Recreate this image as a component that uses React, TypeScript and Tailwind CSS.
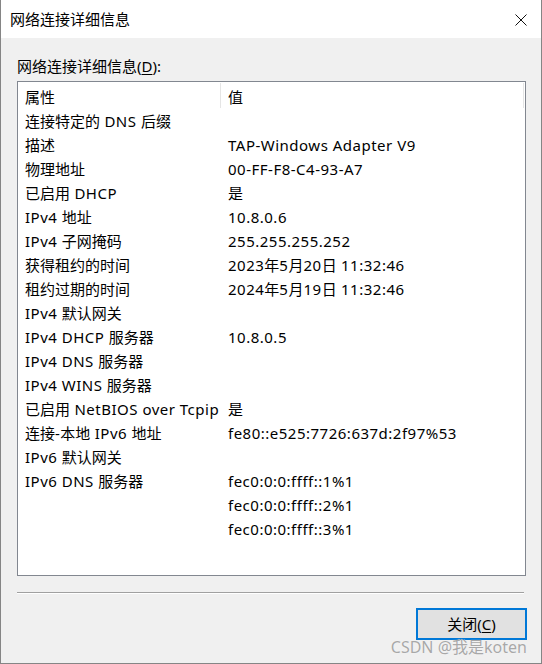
import React from 'react';

const rows: [string, string][] = [
  ['连接特定的 DNS 后缀', ''],
  ['描述', 'TAP-Windows Adapter V9'],
  ['物理地址', '00-FF-F8-C4-93-A7'],
  ['已启用 DHCP', '是'],
  ['IPv4 地址', '10.8.0.6'],
  ['IPv4 子网掩码', '255.255.255.252'],
  ['获得租约的时间', '2023年5月20日 11:32:46'],
  ['租约过期的时间', '2024年5月19日 11:32:46'],
  ['IPv4 默认网关', ''],
  ['IPv4 DHCP 服务器', '10.8.0.5'],
  ['IPv4 DNS 服务器', ''],
  ['IPv4 WINS 服务器', ''],
  ['已启用 NetBIOS over Tcpip', '是'],
  ['连接-本地 IPv6 地址', 'fe80::e525:7726:637d:2f97%53'],
  ['IPv6 默认网关', ''],
  ['IPv6 DNS 服务器', 'fec0:0:0:ffff::1%1'],
  ['', 'fec0:0:0:ffff::2%1'],
  ['', 'fec0:0:0:ffff::3%1'],
];

const font = { fontFamily: '"Segoe UI", "Noto Sans", "Noto Sans CJK SC", sans-serif' };

// latin runs get a little tracking so they come out as wide as Segoe UI
const Txt = ({ s }: { s: string }) => (
  <>
    {s.split(/([\u4e00-\u9fff]+)/).map((part, i) =>
      i % 2 === 1 ? (
        <span key={i}>{part}</span>
      ) : (
        <span key={i} className="tracking-[0.5px]">{part}</span>
      )
    )}
  </>
);

export default function App() {
  return (
    <div
      className="relative w-[542px] h-[664px] flex flex-col border-x border-b border-[#858585] text-[15px] text-black overflow-hidden"
      style={font}
    >
      <div className="h-[38px] bg-white flex items-center justify-between pl-[9px] pr-[14px] shrink-0">
        <span className="leading-5">网络连接详细信息</span>
        <svg width="12" height="12" viewBox="0 0 12 12" className="mt-[1px]">
          <path d="M0.5 0.5 L11.5 11.5 M11.5 0.5 L0.5 11.5" stroke="#111" strokeWidth="1" fill="none" />
        </svg>
      </div>
      <div className="flex-1 bg-[#f0f0f0] flex flex-col pl-[16px] pr-[15px]">
        <div className="mt-[18px] leading-5">
          网络连接详细信息(<span className="underline underline-offset-2">D</span>):
        </div>
        <div className="mt-[5px] h-[495px] bg-white border border-[#828790] flex flex-col">
          <div className="h-[27px] flex items-stretch shrink-0 pr-[1px]">
            <div className="w-[203px] pl-[7px] pt-[4px] leading-5 border-r border-[#e5e5e5] mt-[1px] mb-[1px]">属性</div>
            <div className="flex-1 pl-[7px] pt-[4px] leading-5 border-r border-[#e5e5e5] mt-[1px] mb-[1px]">值</div>
          </div>
          {rows.map(([k, v], i) => (
            <div key={i} className="h-[24px] flex items-center shrink-0">
              <div className="w-[203px] pl-[7px] leading-5 whitespace-nowrap"><Txt s={k} /></div>
              <div className="flex-1 pl-[7px] leading-5 whitespace-nowrap"><Txt s={v} /></div>
            </div>
          ))}
        </div>
        <div className="mt-[16px] mr-[2px] h-[2px] border-t border-[#a0a0a0] border-b border-b-white" />
        <div className="mt-[14px] flex justify-end -mr-[1px]">
          <button className="w-[111px] h-[32px] bg-[#e1e1e1] border-2 border-[#0078d7] flex items-center justify-center leading-5">
            关闭(<span className="underline underline-offset-2">C</span>)
          </button>
        </div>
      </div>
      <div className="absolute right-[14px] bottom-[6px] text-[16px] text-[#a8a8a8] leading-5" style={{ textShadow: '0 0 1px #fff' }}>
        CSDN @我是koten
      </div>
    </div>
  );
}
